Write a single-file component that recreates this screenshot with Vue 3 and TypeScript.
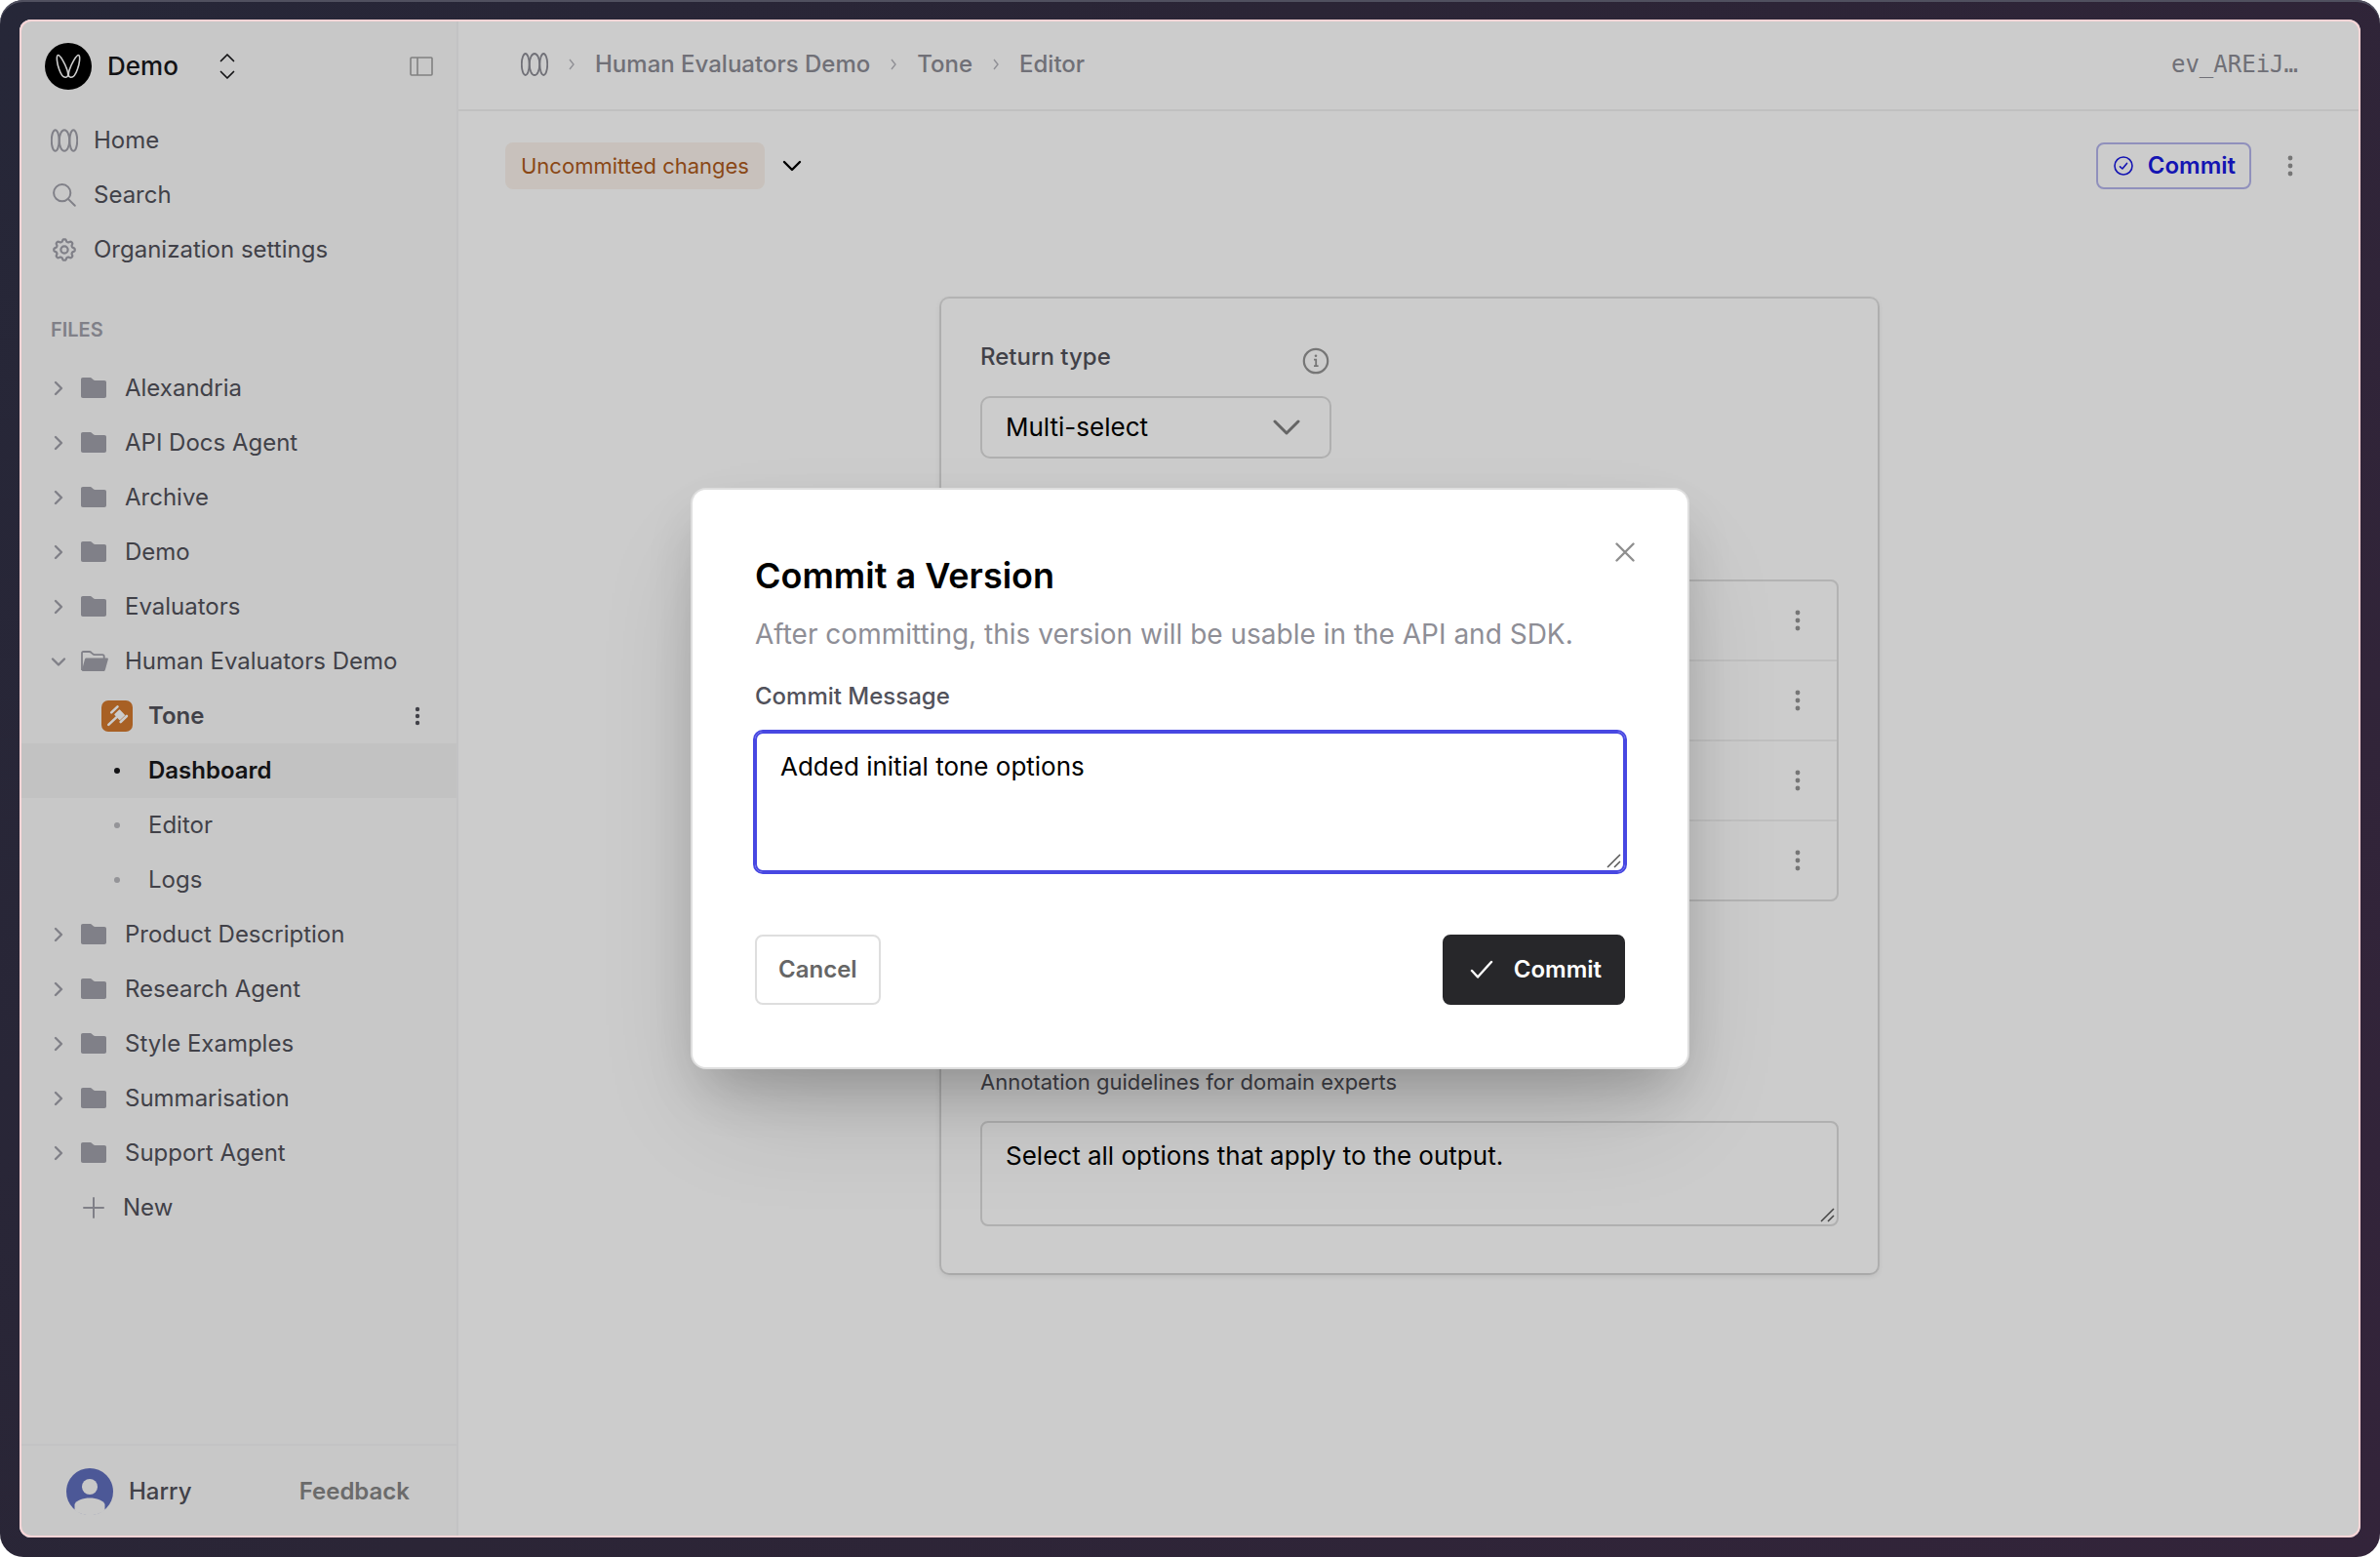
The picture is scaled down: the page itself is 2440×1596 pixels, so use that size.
<script setup lang="ts">
import { ref } from 'vue'

interface FileNode {
  name: string
  open?: boolean
}

const foldersBefore: FileNode[] = [
  { name: 'Alexandria' },
  { name: 'API Docs Agent' },
  { name: 'Archive' },
  { name: 'Demo' },
  { name: 'Evaluators' },
  { name: 'Human Evaluators Demo', open: true },
]
const pages = [
  { name: 'Dashboard', active: true },
  { name: 'Editor', active: false },
  { name: 'Logs', active: false },
]
const foldersAfter: FileNode[] = [
  { name: 'Product Description' },
  { name: 'Research Agent' },
  { name: 'Style Examples' },
  { name: 'Summarisation' },
  { name: 'Support Agent' },
]
const crumbs = ['Human Evaluators Demo', 'Tone', 'Editor']
const optionCount = 4

const returnType = ref('multi')
const instructions = ref('Select all options that apply to the output.')
const message = ref('Added initial tone options')

/* Outline of a cog with eight rounded teeth */
function cogPath(cx: number, cy: number, r: number, depth: number): string {
  const points: string[] = []
  for (let i = 0; i < 160; i++) {
    const a = (i / 160) * Math.PI * 2
    const d = r + depth * Math.tanh(1.8 * Math.cos(8 * a))
    points.push(`${(cx + d * Math.sin(a)).toFixed(2)} ${(cy - d * Math.cos(a)).toFixed(2)}`)
  }
  return `M${points.join('L')}Z`
}
const cog = cogPath(14, 14, 9.6, 1.2)
</script>

<template>
  <div class="frame">
    <div class="window">
      <aside class="sidebar">
        <div class="org">
          <svg class="org-logo" viewBox="0 0 48 48" aria-hidden="true">
            <circle cx="24" cy="24" r="24" fill="#000" />
            <g fill="none" stroke="#fff" stroke-width="1.6">
              <path d="M13.2 12.6c-1.6 1-.9 8.300 1.400 14.400 2 5.800 4.800 8.600 7 8.200 2.600-.500 2.800-3.200 1-8.200-1.600-4.600-7-15.600-9.400-14.400Z" />
              <path d="M34.800 12.600c1.600 1 .9 8.300-1.400 14.400-2 5.800-4.800 8.600-7 8.200-2.600-.5-2.800-3.200-1-8.200 1.600-4.600 7-15.600 9.400-14.400Z" />
            </g>
          </svg>
          <span class="org-name">Demo</span>
          <button class="bare switcher" aria-label="Switch organization">
            <svg width="16" height="28" viewBox="0 0 16 28"><path d="M1.500 8.500 8 2l6.500 6.500M1.500 19.500 8 26l6.500-6.500" fill="none" stroke="#18181b" stroke-width="1.700" stroke-linecap="round" stroke-linejoin="round" /></svg>
          </button>
          <button class="bare collapse" aria-label="Collapse sidebar">
            <svg width="24" height="20" viewBox="0 0 24 20"><path d="M2 1h20a1 1 0 0 1 1 1v16a1 1 0 0 1-1 1H2a1 1 0 0 1-1-1V2a1 1 0 0 1 1-1ZM8 1v18" fill="none" stroke="#a1a1a1" stroke-width="1.600" /></svg>
          </button>
        </div>

        <nav class="nav">
          <a href="#" class="nav-item">
            <svg width="28" height="24" viewBox="0 0 28 24" fill="none" stroke="#a1a1aa" stroke-width="2"><ellipse cx="4.700" cy="12" rx="3.900" ry="10.800" /><ellipse cx="14" cy="12" rx="5.200" ry="10.800" /><ellipse cx="23.300" cy="12" rx="3.900" ry="10.800" /></svg>
            Home
          </a>
          <a href="#" class="nav-item">
            <svg width="28" height="28" viewBox="0 0 28 28" fill="none" stroke="#a1a1aa" stroke-width="2" stroke-linecap="round"><circle cx="11.700" cy="11.700" r="8.600" /><path d="m17.800 17.900 7 6.900" /></svg>
            Search
          </a>
          <a href="#" class="nav-item">
            <svg width="28" height="28" viewBox="0 0 28 28" fill="none" stroke="#a1a1aa" stroke-width="2.200" stroke-linejoin="round"><path :d="cog" /><circle cx="14" cy="14" r="3.600" /></svg>
            Organization settings
          </a>
        </nav>

        <h2 class="section">FILES</h2>
        <nav class="nav">
          <a v-for="f in foldersBefore" :key="f.name" href="#" class="file">
            <svg v-if="f.open" class="arrow" viewBox="0 0 16 16"><path d="m2 5.500 6 6 6-6" /></svg>
            <svg v-else class="arrow" viewBox="0 0 16 16"><path d="m5 2 6 6-6 6" /></svg>
            <svg v-if="f.open" class="folder" viewBox="0 0 28 22">
              <path d="M1 20V2.500C1 1.500 1.500 1 2.500 1H8.500c1 0 1.600.4 2.300 1.100l1.400 1.300c.5.500 1 .7 1.800.7h8c1.200 0 1.700.6 1.700 1.600V8" fill="none" stroke="#a1a1aa" stroke-width="1.800" />
              <path d="M5.600 7.500h21c1 0 1.500.6 1.200 1.500l-3 10.800c-.3.900-.8 1.300-1.700 1.300H2c-1 0-1.300-.5-1-1.400L3.900 9c.3-1 .8-1.500 1.700-1.500Z" />
            </svg>
            <svg v-else class="folder" viewBox="0 0 28 22"><path d="M2 0h7c1 0 1.600.300 2.300 1l1.400 1.300c.5.500 1 .7 1.800.7H24c1.300 0 2 .7 2 2v14c0 1.300-.7 2-2 2H2c-1.300 0-2-.7-2-2V2C0 .7.700 0 2 0Z" /></svg>
            <span>{{ f.name }}</span>
          </a>
          <div class="file tool">
            <svg width="32" height="32" viewBox="0 0 32 32" aria-hidden="true">
              <rect width="32" height="32" rx="7" fill="#d2782d" />
              <g stroke="#fff" stroke-width="2.600" stroke-linecap="round" fill="#fff">
                <path d="m10.200 12.400 6.300-6M19.700 22l6.200-6M7.300 24.900l8-7.500" />
                <path d="m14.300 14.400 4.200-4 4.500 4.700-4.200 4Z" stroke-width="2" stroke-linejoin="round" />
              </g>
            </svg>
            <a href="#" class="tool-name">Tone</a>
            <button class="bare tool-menu" aria-label="Tone menu">
              <svg width="8" height="24" viewBox="0 0 8 24" fill="#52525b"><circle cx="4" cy="5" r="2.200" /><circle cx="4" cy="12" r="2.200" /><circle cx="4" cy="19" r="2.200" /></svg>
            </button>
          </div>
          <a v-for="p in pages" :key="p.name" href="#" class="file page" :class="{ active: p.active }">
            <i class="bullet"></i>{{ p.name }}
          </a>
          <a v-for="f in foldersAfter" :key="f.name" href="#" class="file">
            <svg class="arrow" viewBox="0 0 16 16"><path d="m5 2 6 6-6 6" /></svg>
            <svg class="folder" viewBox="0 0 28 22"><path d="M2 0h7c1 0 1.600.300 2.300 1l1.400 1.300c.5.500 1 .7 1.800.7H24c1.300 0 2 .7 2 2v14c0 1.300-.7 2-2 2H2c-1.300 0-2-.7-2-2V2C0 .7.700 0 2 0Z" /></svg>
            <span>{{ f.name }}</span>
          </a>
          <button class="bare file new">
            <svg width="24" height="24" viewBox="0 0 24 24"><path d="M12 2v20M2 12h20" fill="none" stroke="#a1a1aa" stroke-width="2" stroke-linecap="round" /></svg>
            New
          </button>
        </nav>

        <footer class="account">
          <svg width="48" height="48" viewBox="0 0 48 48" aria-hidden="true">
            <circle cx="24" cy="24" r="24" fill="#606ebd" />
            <circle cx="24" cy="19" r="8" fill="#fafafa" />
            <path d="M8.500 43V37C10 33 17 30.500 24 30.500S38 33 39.500 37V43C35 46.500 30 48.200 24 48.200S13 46.500 8.500 43Z" fill="#fafafa" />
          </svg>
          <span class="user">Harry</span>
          <a href="#" class="feedback">Feedback</a>
        </footer>
      </aside>

      <main class="main">
        <header class="header">
          <nav class="crumbs" aria-label="Breadcrumb">
            <svg width="28" height="24" viewBox="0 0 28 24" fill="none" stroke="#8c8c95" stroke-width="1.800"><ellipse cx="4.700" cy="12" rx="3.900" ry="11" /><ellipse cx="14" cy="12" rx="5.200" ry="11" /><ellipse cx="23.300" cy="12" rx="3.900" ry="11" /></svg>
            <template v-for="c in crumbs" :key="c">
              <svg class="sep" width="8" height="12" viewBox="0 0 8 12"><path d="m2 1 4 5-4 5" fill="none" stroke="#b4b4bb" stroke-width="1.400" /></svg>
              <a href="#">{{ c }}</a>
            </template>
          </nav>
          <code class="file-id">ev_AREiJ…</code>
        </header>

        <div class="toolbar">
          <span class="badge">Uncommitted changes</span>
          <button class="bare versions" aria-label="Show versions">
            <svg width="20" height="14" viewBox="0 0 20 14"><path d="m2 3 8 8 8-8" fill="none" stroke="#000" stroke-width="2.400" stroke-linecap="round" stroke-linejoin="round" /></svg>
          </button>
          <button class="commit-outline">
            <svg width="20" height="20" viewBox="0 0 20 20" fill="none" stroke="currentColor" stroke-width="1.600" stroke-linecap="round" stroke-linejoin="round"><circle cx="10" cy="10" r="9" /><path d="m6.500 10.800 2.400 2.200 4.600-5.600" /></svg>
            Commit
          </button>
          <button class="bare dots" aria-label="More actions">
            <svg width="8" height="24" viewBox="0 0 8 24"><circle cx="4" cy="4" r="2.400" /><circle cx="4" cy="12" r="2.400" /><circle cx="4" cy="20" r="2.400" /></svg>
          </button>
        </div>

        <section class="card">
          <div class="field-head">
            <label for="return-type">Return type</label>
            <button class="bare info" aria-label="About return types">
              <svg width="28" height="28" viewBox="0 0 28 28" fill="none" stroke="#949494"><circle cx="14" cy="14" r="12.200" stroke-width="2.200" /><path d="M12 12.700h2.200v6.300M12 19.200h4.600" stroke-width="1.800" /><circle cx="14" cy="8.700" r="1.300" fill="#949494" stroke="none" /></svg>
            </button>
          </div>
          <div class="select">
            <select id="return-type" v-model="returnType">
              <option value="multi">Multi-select</option>
            </select>
            <svg width="28" height="18" viewBox="0 0 28 18"><path d="m2 3 12 12L26 3" fill="none" stroke="#7f7f7f" stroke-width="3" stroke-linecap="round" stroke-linejoin="round" /></svg>
          </div>

          <ul class="options">
            <li v-for="n in optionCount" :key="n">
              <button class="bare dots" aria-label="Option menu">
                <svg width="8" height="24" viewBox="0 0 8 24"><circle cx="4" cy="4" r="2.400" /><circle cx="4" cy="12" r="2.400" /><circle cx="4" cy="20" r="2.400" /></svg>
              </button>
            </li>
          </ul>

          <label class="hint" for="instructions">Annotation guidelines for domain experts</label>
          <div class="area">
            <textarea id="instructions" v-model="instructions"></textarea>
            <svg class="grip" width="16" height="16" viewBox="0 0 16 16"><path d="M2 15 15 2M9 15l6-6" fill="none" stroke="#555" stroke-width="1.500" /></svg>
          </div>
        </section>
      </main>

      <div class="overlay"></div>
    </div>

    <div class="stage">
      <section class="dialog" role="dialog" aria-modal="true" aria-labelledby="dialog-title">
        <button class="bare close" aria-label="Close">
          <svg width="20" height="20" viewBox="0 0 20 20"><path d="m1.500 1.500 17 17M18.500 1.500l-17 17" fill="none" stroke="#8f8f8f" stroke-width="2.400" stroke-linecap="round" /></svg>
        </button>
        <h1 id="dialog-title">Commit a Version</h1>
        <p>After committing, this version will be usable in the API and SDK.</p>
        <label for="message">Commit Message</label>
        <div class="area focused">
          <textarea id="message" v-model="message"></textarea>
          <svg class="grip" width="16" height="16" viewBox="0 0 16 16"><path d="M2 15 15 2M9 15l6-6" fill="none" stroke="#555" stroke-width="1.500" /></svg>
        </div>
        <div class="actions">
          <button class="btn cancel">Cancel</button>
          <button class="btn primary">
            <svg width="24" height="20" viewBox="0 0 24 20"><path d="m2 11 6 6.500L22 2" fill="none" stroke="#fff" stroke-width="2.400" stroke-linecap="round" stroke-linejoin="round" /></svg>
            Commit
          </button>
        </div>
      </section>
    </div>
  </div>
</template>

<style>
body {
  margin: 0;
  background: #fff;
}
</style>

<style scoped>
* {
  box-sizing: border-box;
}
.frame {
  position: relative;
  display: flex;
  min-height: 100vh;
  padding: 20px;
  border-radius: 24px;
  background: linear-gradient(120deg, #262738, #2b2536 40%, #33243a);
  box-shadow: inset 0 2px 0 #50505f;
  font-family: Inter, "Liberation Sans", sans-serif;
  font-size: 24px;
  line-height: 32px;
  color: #52525b;
}
.window {
  position: relative;
  display: flex;
  flex: 1;
  border-radius: 12px;
  overflow: hidden;
  background: #fff;
}
.overlay {
  position: absolute;
  inset: 0;
  border-radius: 12px;
  background: rgba(0, 0, 0, 0.2);
}
.overlay::after {
  content: "";
  position: absolute;
  inset: 0;
  border: 2px solid #f8d4d6;
  border-radius: 12px;
}
a {
  color: inherit;
  text-decoration: none;
}
button {
  font: inherit;
  cursor: pointer;
}
svg {
  display: block;
  flex: none;
}
.bare {
  display: flex;
  align-items: center;
  justify-content: center;
  padding: 0;
  border: 0;
  background: none;
  color: inherit;
}

/* Sidebar */
.sidebar {
  display: flex;
  flex-direction: column;
  flex: none;
  width: 450px;
  border-right: 2px solid #f4f4f5;
  background: #fafafa;
}
.org {
  display: flex;
  align-items: center;
  height: 96px;
  padding: 0 24px 0 26px;
}
.org-logo {
  width: 48px;
  height: 48px;
}
.org-name {
  margin-left: 16px;
  font-size: 26px;
  font-weight: 500;
  color: #18181b;
}
.switcher {
  margin-left: 42px;
}
.collapse {
  margin-left: auto;
}
.nav {
  display: flex;
  flex-direction: column;
}
.nav-item {
  display: flex;
  align-items: center;
  gap: 16px;
  height: 56px;
  padding-left: 32px;
}
.section {
  margin: 42px 0 20px;
  padding-left: 32px;
  font-size: 20px;
  line-height: 24px;
  font-weight: 600;
  color: #a1a1aa;
}
.file {
  display: flex;
  align-items: center;
  height: 56px;
  padding: 0 36px 0 32px;
}
.arrow {
  width: 16px;
  height: 16px;
  fill: none;
  stroke: #a1a1aa;
  stroke-width: 2.4;
  stroke-linecap: round;
  stroke-linejoin: round;
}
.folder {
  width: 28px;
  height: 22px;
  margin: 0 17px 0 15px;
  fill: #a1a1aa;
}
.tool {
  padding-left: 84px;
  font-weight: 600;
}
.tool-name {
  margin-left: 16px;
}
.tool-menu {
  margin-left: auto;
}
.page {
  padding-left: 97px;
}
.bullet {
  width: 6px;
  height: 6px;
  margin-right: 29px;
  border-radius: 50%;
  background: #b9b9be;
}
.active {
  background: #f3f3f3;
  color: #18181b;
  font-weight: 600;
}
.active .bullet {
  background: #18181b;
}
.new {
  justify-content: flex-start;
  gap: 18px;
  padding-left: 64px;
}
.account {
  display: flex;
  align-items: center;
  height: 96px;
  margin-top: auto;
  padding: 0 48px;
  border-top: 2px solid #f4f4f5;
}
.user {
  margin-left: 16px;
  font-weight: 500;
}
.feedback {
  margin-left: auto;
  font-weight: 600;
  color: #868686;
}

/* Main column */
.main {
  flex: 1;
  min-width: 0;
}
.header {
  display: flex;
  align-items: center;
  justify-content: space-between;
  height: 94px;
  padding: 0 64px;
  border-bottom: 2px solid #f0f0f0;
  color: #8c8c95;
}
.crumbs {
  display: flex;
  align-items: center;
  font-weight: 500;
}
.sep {
  margin: 0 20px;
}
.file-id {
  font-family: "DejaVu Sans Mono", "Liberation Mono", monospace;
  font-size: 24px;
}
.toolbar {
  display: flex;
  align-items: center;
  padding: 32px 48px 0;
}
.badge {
  padding: 0 16px;
  border-radius: 8px;
  background: #fbf2eb;
  color: #ad5a1c;
  font-size: 22px;
  line-height: 48px;
}
.versions {
  margin-left: 18px;
}
.commit-outline {
  display: flex;
  align-items: center;
  gap: 15px;
  height: 48px;
  margin-left: auto;
  margin-right: 16px;
  padding: 0 14px 0 16px;
  border: 2px solid #b4b5ec;
  border-radius: 8px;
  background: none;
  color: #1919e0;
  font-weight: 600;
}
.dots {
  width: 48px;
  height: 48px;
}
.dots svg {
  fill: #949494;
}
.card {
  max-width: 960px;
  margin: 112px auto 0;
  padding: 40px 40px 48px;
  border-radius: 8px;
  box-shadow: 0 0 0 2px rgba(0, 0, 0, 0.1), 0 2px 6px rgba(0, 0, 0, 0.12);
}
.field-head {
  display: flex;
  align-items: flex-end;
  justify-content: space-between;
  width: 360px;
  padding-right: 2px;
  font-weight: 500;
  line-height: 40px;
}
.info {
  height: 32px;
}
.select {
  position: relative;
  width: 360px;
  margin-top: 20px;
}
.select select {
  display: block;
  width: 100%;
  height: 64px;
  padding: 0 24px;
  border: 2px solid #dcdcdc;
  border-radius: 10px;
  background: none;
  appearance: none;
  font: inherit;
  font-size: 26px;
  color: #000;
}
.select svg {
  position: absolute;
  right: 32px;
  top: 23px;
  pointer-events: none;
}
.options {
  margin: 124px 0 0;
  padding: 0;
  border: 2px solid #e0e0e0;
  border-radius: 8px;
  list-style: none;
}
.options li {
  display: flex;
  align-items: center;
  justify-content: flex-end;
  box-sizing: content-box;
  height: 80px;
  padding-right: 16px;
}
.options li + li {
  border-top: 2px solid #f0f0f0;
}
.hint {
  display: block;
  margin: 169px 0 24px;
  font-size: 22px;
}
.area {
  position: relative;
}
.area textarea {
  display: block;
  width: 100%;
  height: 108px;
  padding: 14px 24px;
  border: 2px solid #dcdcdc;
  border-radius: 8px;
  background: none;
  resize: none;
  font: inherit;
  font-size: 26px;
  line-height: 40px;
  color: #000;
}
.grip {
  position: absolute;
  right: 4px;
  bottom: 4px;
}

/* Dialog */
.stage {
  position: absolute;
  inset: 0;
  display: grid;
  place-items: center;
}
.dialog {
  position: relative;
  width: 1024px;
  max-width: 90%;
  padding: 64px;
  border: 2px solid #dedede;
  border-radius: 16px;
  background: #fff;
  box-shadow: 0 56px 110px -24px rgba(0, 0, 0, 0.16), 0 28px 56px -12px rgba(0, 0, 0, 0.2);
}
.close {
  position: absolute;
  top: 44px;
  right: 44px;
  width: 40px;
  height: 40px;
}
.dialog h1 {
  margin: 0;
  font-size: 36px;
  line-height: 48px;
  font-weight: 600;
  color: #000;
}
.dialog p {
  margin: 16px 0 28px;
  font-size: 28px;
  line-height: 40px;
  color: #8e8e96;
}
.dialog label {
  display: block;
  margin-bottom: 20px;
  font-weight: 500;
}
.focused textarea {
  height: 144px;
  border-color: #4848e2;
  outline: 2px solid #4848e2;
}
.actions {
  display: flex;
  justify-content: space-between;
  margin-top: 64px;
}
.btn {
  display: flex;
  align-items: center;
  height: 72px;
  padding: 0 22px;
  border: 2px solid #dedede;
  border-radius: 8px;
  background: #fff;
  color: #666;
  font-weight: 600;
}
.primary {
  gap: 21px;
  padding-left: 26px;
  border-color: #27272a;
  background: #27272a;
  color: #fff;
}
</style>
